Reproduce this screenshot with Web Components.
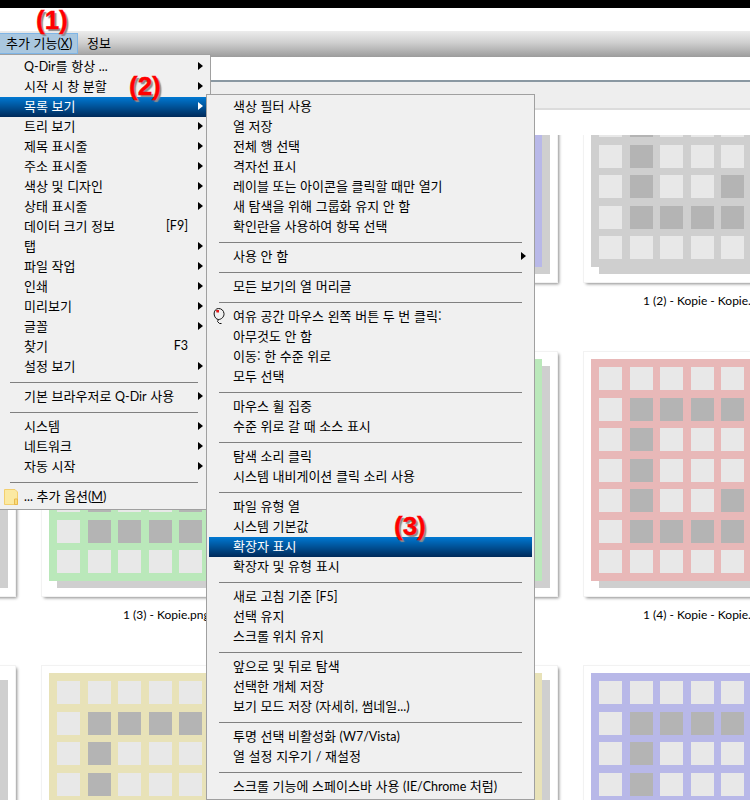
<!DOCTYPE html>
<html lang="ko">
<head>
<meta charset="utf-8">
<title>Q-Dir</title>
<style>
  html, body { margin: 0; padding: 0; background: #fff; overflow: hidden; }
  body { width: 750px; height: 800px; font: 13px "Noto Sans CJK KR", "Noto Sans", sans-serif; color: #000; }
  .l { font: 12.5px Lato, "Noto Sans", sans-serif; }
</style>
</head>
<body>
<qdir-window>
  <qdir-bar-item slot="bar" active>추가 기능<span class="l">(<u>X</u>)</span></qdir-bar-item>
  <qdir-bar-item slot="bar">정보</qdir-bar-item>

  <qdir-thumb slot="list" color="#b8b8e8"></qdir-thumb>
  <qdir-thumb slot="list" color="#b8b8e8"></qdir-thumb>
  <qdir-thumb slot="list" color="#cfcfcf" label="1 (2) - Kopie - Kopie." label-x="59"></qdir-thumb>
  <qdir-thumb slot="list" color="#bae8ba"></qdir-thumb>
  <qdir-thumb slot="list" color="#bae8ba" label="1 (3) - Kopie.png" label-x="81"></qdir-thumb>
  <qdir-thumb slot="list" color="#e8b8b8" label="1 (4) - Kopie - Kopie." label-x="59"></qdir-thumb>
  <qdir-thumb slot="list" color="#e8e2b8"></qdir-thumb>
  <qdir-thumb slot="list" color="#e8e2b8"></qdir-thumb>
  <qdir-thumb slot="list" color="#b8b8e8"></qdir-thumb>

  <qdir-menu slot="overlay" style="left:-3px;top:54px;width:208px;--item-right:5px">
    <qdir-item arrow><span class="l">Q-Dir</span>를 항상 <span class="l">...</span></qdir-item>
    <qdir-item arrow>시작 시 창 분할</qdir-item>
    <qdir-item arrow active>목록 보기</qdir-item>
    <qdir-item arrow>트리 보기</qdir-item>
    <qdir-item arrow>제목 표시줄</qdir-item>
    <qdir-item arrow>주소 표시줄</qdir-item>
    <qdir-item arrow>색상 및 디자인</qdir-item>
    <qdir-item arrow>상태 표시줄</qdir-item>
    <qdir-item key="[F9]">데이터 크기 정보</qdir-item>
    <qdir-item arrow>탭</qdir-item>
    <qdir-item arrow>파일 작업</qdir-item>
    <qdir-item arrow>인쇄</qdir-item>
    <qdir-item arrow>미리보기</qdir-item>
    <qdir-item arrow>글꼴</qdir-item>
    <qdir-item key="F3">찾기</qdir-item>
    <qdir-item arrow>설정 보기</qdir-item>
    <qdir-sep></qdir-sep>
    <qdir-item arrow>기본 브라우저로 <span class="l">Q-Dir</span> 사용</qdir-item>
    <qdir-sep></qdir-sep>
    <qdir-item arrow>시스템</qdir-item>
    <qdir-item arrow>네트워크</qdir-item>
    <qdir-item arrow>자동 시작</qdir-item>
    <qdir-sep></qdir-sep>
    <qdir-item>
      <svg slot="icon" width="14" height="16" viewBox="0 0 14 16"><path d="M.5.5H11L13.500 3V15.500H.5Z" fill="#fbe9a2" stroke="#f3cf6e"/><path d="M10.500 10H13.500V15.500H10.500Z" fill="#f9dc7c" stroke="#e9b94e"/></svg>
      <span class="l">...</span> 추가 옵션<span class="l">(<u>M</u>)</span>
    </qdir-item>
  </qdir-menu>

  <qdir-menu slot="overlay" style="left:206px;top:94px;width:323px;--item-right:6px">
    <qdir-item>색상 필터 사용</qdir-item>
    <qdir-item>열 저장</qdir-item>
    <qdir-item>전체 행 선택</qdir-item>
    <qdir-item>격자선 표시</qdir-item>
    <qdir-item>레이블 또는 아이콘을 클릭할 때만 열기</qdir-item>
    <qdir-item>새 탐색을 위해 그룹화 유지 안 함</qdir-item>
    <qdir-item>확인란을 사용하여 항목 선택</qdir-item>
    <qdir-sep></qdir-sep>
    <qdir-item arrow>사용 안 함</qdir-item>
    <qdir-sep></qdir-sep>
    <qdir-item>모든 보기의 열 머리글</qdir-item>
    <qdir-sep></qdir-sep>
    <qdir-item>
      <svg slot="icon" style="display:block;margin-top:-2px" width="13" height="18" viewBox="0 0 13 18"><path d="M5.500 1.500C3 1.500 .9 4 1.100 7C1.300 10 3.300 12.500 5.500 12.500C8.200 12.500 11.300 10 11 6.500C10.700 3.500 8.500 1.500 5.500 1.500ZM5.500 12.500L4.500 14.500L6.500 16.500H8.500" fill="none" stroke="#111"/><path d="M3 3H6V5.500H3.500Z" fill="#e01818"/></svg>
      여유 공간 마우스 왼쪽 버튼 두 번 클릭:
    </qdir-item>
    <qdir-item>아무것도 안 함</qdir-item>
    <qdir-item>이동: 한 수준 위로</qdir-item>
    <qdir-item>모두 선택</qdir-item>
    <qdir-sep></qdir-sep>
    <qdir-item>마우스 휠 집중</qdir-item>
    <qdir-item>수준 위로 갈 때 소스 표시</qdir-item>
    <qdir-sep></qdir-sep>
    <qdir-item>탐색 소리 클릭</qdir-item>
    <qdir-item>시스템 내비게이션 클릭 소리 사용</qdir-item>
    <qdir-sep></qdir-sep>
    <qdir-item>파일 유형 열</qdir-item>
    <qdir-item>시스템 기본값</qdir-item>
    <qdir-item active>확장자 표시</qdir-item>
    <qdir-item>확장자 및 유형 표시</qdir-item>
    <qdir-sep></qdir-sep>
    <qdir-item>새로 고침 기준 <span class="l">[F5]</span></qdir-item>
    <qdir-item>선택 유지</qdir-item>
    <qdir-item>스크롤 위치 유지</qdir-item>
    <qdir-sep></qdir-sep>
    <qdir-item>앞으로 및 뒤로 탐색</qdir-item>
    <qdir-item>선택한 개체 저장</qdir-item>
    <qdir-item>보기 모드 저장 <span class="l">(</span>자세히<span class="l">,</span> 썸네일<span class="l">...)</span></qdir-item>
    <qdir-sep></qdir-sep>
    <qdir-item>투명 선택 비활성화 <span class="l">(W7/Vista)</span></qdir-item>
    <qdir-item>열 설정 지우기 <span class="l">/</span> 재설정</qdir-item>
    <qdir-sep></qdir-sep>
    <qdir-item>스크롤 기능에 스페이스바 사용 <span class="l">(IE/Chrome</span> 처럼<span class="l">)</span></qdir-item>
  </qdir-menu>

  <qdir-note slot="overlay" style="left:36px;top:5px">(1)</qdir-note>
  <qdir-note slot="overlay" style="left:129px;top:71px">(2)</qdir-note>
  <qdir-note slot="overlay" style="left:394px;top:511px">(3)</qdir-note>
</qdir-window>

<script>
class QdirWindow extends HTMLElement {
  constructor() {
    super();
    this.attachShadow({ mode: 'open' });
    this.shadowRoot.innerHTML = `
      <style>
        :host { display: block; position: relative; width: 750px; height: 800px; overflow: hidden; background: #fff; }
        .black { height: 8px; background: #000; }
        .title { height: 23px; background: #fff; }
        .bar {
          height: 24px;
          display: flex;
          align-items: flex-start;
          padding-top: 2px;
          box-sizing: content-box;
          background: linear-gradient(#ececec, #cfcfcf 45%, #9c9c9c);
        }
        .address { height: 23px; background: #fff; border-bottom: 2px solid #8a98a2; }
        .tabs { height: 26px; background: #eee; border-bottom: 2px solid #dcdcdc; }
        .gap { height: 25px; background: #fff; }
        .list { height: 665px; overflow: hidden; }
        .grid {
          display: grid;
          grid-template-columns: repeat(3, 515px);
          column-gap: 27px;
          margin: -97px 0 0 -500px;
          width: 1700px;
        }
      </style>
      <div class="black"></div>
      <div class="title"></div>
      <div class="bar"><slot name="bar"></slot></div>
      <div class="address"></div>
      <div class="tabs"></div>
      <div class="gap"></div>
      <div class="list"><div class="grid"><slot name="list"></slot></div></div>
      <slot name="overlay"></slot>
    `;
  }
}

class QdirBarItem extends HTMLElement {
  constructor() {
    super();
    this.attachShadow({ mode: 'open' });
    this.shadowRoot.innerHTML = `
      <style>
        :host { display: block; height: 19px; padding: 0 7px 0 7px; line-height: 18px; font-size: 13px; border: 1px solid transparent; box-sizing: content-box; }
        :host([active]) { background: #a9c7df; border-color: #7fb5e6; width: 71px; padding: 0 0 0 6px; margin: 0 1px 0 -1px; }
      </style>
      <slot></slot>
    `;
  }
}

class QdirThumb extends HTMLElement {
  constructor() {
    super();
    this.attachShadow({ mode: 'open' });
    const pattern = ['00000', '01111', '01000', '01000', '01001', '01111', '00000'];
    const cells = pattern.join('').split('').map(c => `<i class="${c === '1' ? 'on' : ''}"></i>`).join('');
    const label = this.getAttribute('label') || '';
    const x = this.getAttribute('label-x') || 0;
    this.shadowRoot.innerHTML = `
      <style>
        :host { display: block; height: 314px; }
        .card {
          box-sizing: border-box;
          width: 515px;
          height: 244px;
          padding: 7px;
          background: #fff;
          outline: 1px solid #f2f2f2;
          box-shadow: 2px 2px 3px #8a8a8a;
        }
        .image {
          box-sizing: border-box;
          width: 493px;
          height: 222px;
          padding: 8px;
          background: ${this.getAttribute('color') || '#ccc'};
          box-shadow: 8px 7px 0 #cfcfcf;
          display: grid;
          grid-template-columns: repeat(5, 23px);
          grid-auto-rows: 23px;
          gap: 7.5px;
        }
        i { display: block; background: #e8e8e8; }
        i.on { background: #b4b4b4; }
        .label { margin-top: 10px; height: 18px; font: 12px/18px Lato, "Noto Sans", sans-serif; white-space: nowrap; padding-left: ${x}px; color: #000; }
      </style>
      <div class="card"><div class="image">${cells}</div></div>
      <div class="label">${label}</div>
    `;
  }
}

class QdirMenu extends HTMLElement {
  constructor() {
    super();
    this.attachShadow({ mode: 'open' });
    this.shadowRoot.innerHTML = `
      <style>
        :host { display: block; position: absolute; padding: 2px; background: #f0f0f0; border: 1px solid #a0a0a0; box-sizing: content-box; }
      </style>
      <slot></slot>
    `;
  }
}

class QdirItem extends HTMLElement {
  constructor() {
    super();
    this.attachShadow({ mode: 'open' });
    const key = this.getAttribute('key');
    this.shadowRoot.innerHTML = `
      <style>
        :host { display: block; height: 20px; font-size: 13px; color: #000; }
        :host([active]) { color: #fff; background: linear-gradient(#0078d2, #002a5a); }
        .row { position: relative; box-sizing: border-box; display: flex; align-items: center; height: 20px; padding: 0 var(--item-right, 5px) 4px 24px; white-space: nowrap; }
        .text { flex: 1; }
        .icon { position: absolute; left: 4px; top: 2px; line-height: 0; }
        .key { margin-right: 10px; font: 12.5px Lato, "Noto Sans", sans-serif; }
        .arrow { width: 0; height: 0; margin-top: 1px; border-left: 5px solid transparent; border-top: 4px solid transparent; border-bottom: 4px solid transparent; }
        :host([arrow]) .arrow { border-left-color: #000; }
        :host([arrow][active]) .arrow { border-left-color: #fff; }
      </style>
      <div class="row">
        <span class="icon"><slot name="icon"></slot></span>
        <span class="text"><slot></slot></span>
        ${key ? `<span class="key">${key}</span>` : ''}
        <span class="arrow"></span>
      </div>
    `;
  }
}

class QdirSep extends HTMLElement {
  constructor() {
    super();
    this.attachShadow({ mode: 'open' });
    this.shadowRoot.innerHTML = `
      <style>
        :host { display: block; height: 10px; padding: 5px 10px 0; box-sizing: border-box; }
        div { height: 1px; background: #808080; }
      </style>
      <div></div>
    `;
  }
}

class QdirNote extends HTMLElement {
  constructor() {
    super();
    this.attachShadow({ mode: 'open' });
    this.shadowRoot.innerHTML = `
      <style>
        :host { display: block; position: absolute; font: bold 26px/30px "Liberation Sans", sans-serif; color: #f00; -webkit-text-stroke: 0.4px #f00; text-shadow: 2px 2px 1px #8c8c8c; }
      </style>
      <slot></slot>
    `;
  }
}

customElements.define('qdir-window', QdirWindow);
customElements.define('qdir-bar-item', QdirBarItem);
customElements.define('qdir-thumb', QdirThumb);
customElements.define('qdir-menu', QdirMenu);
customElements.define('qdir-item', QdirItem);
customElements.define('qdir-sep', QdirSep);
customElements.define('qdir-note', QdirNote);
</script>
</body>
</html>
